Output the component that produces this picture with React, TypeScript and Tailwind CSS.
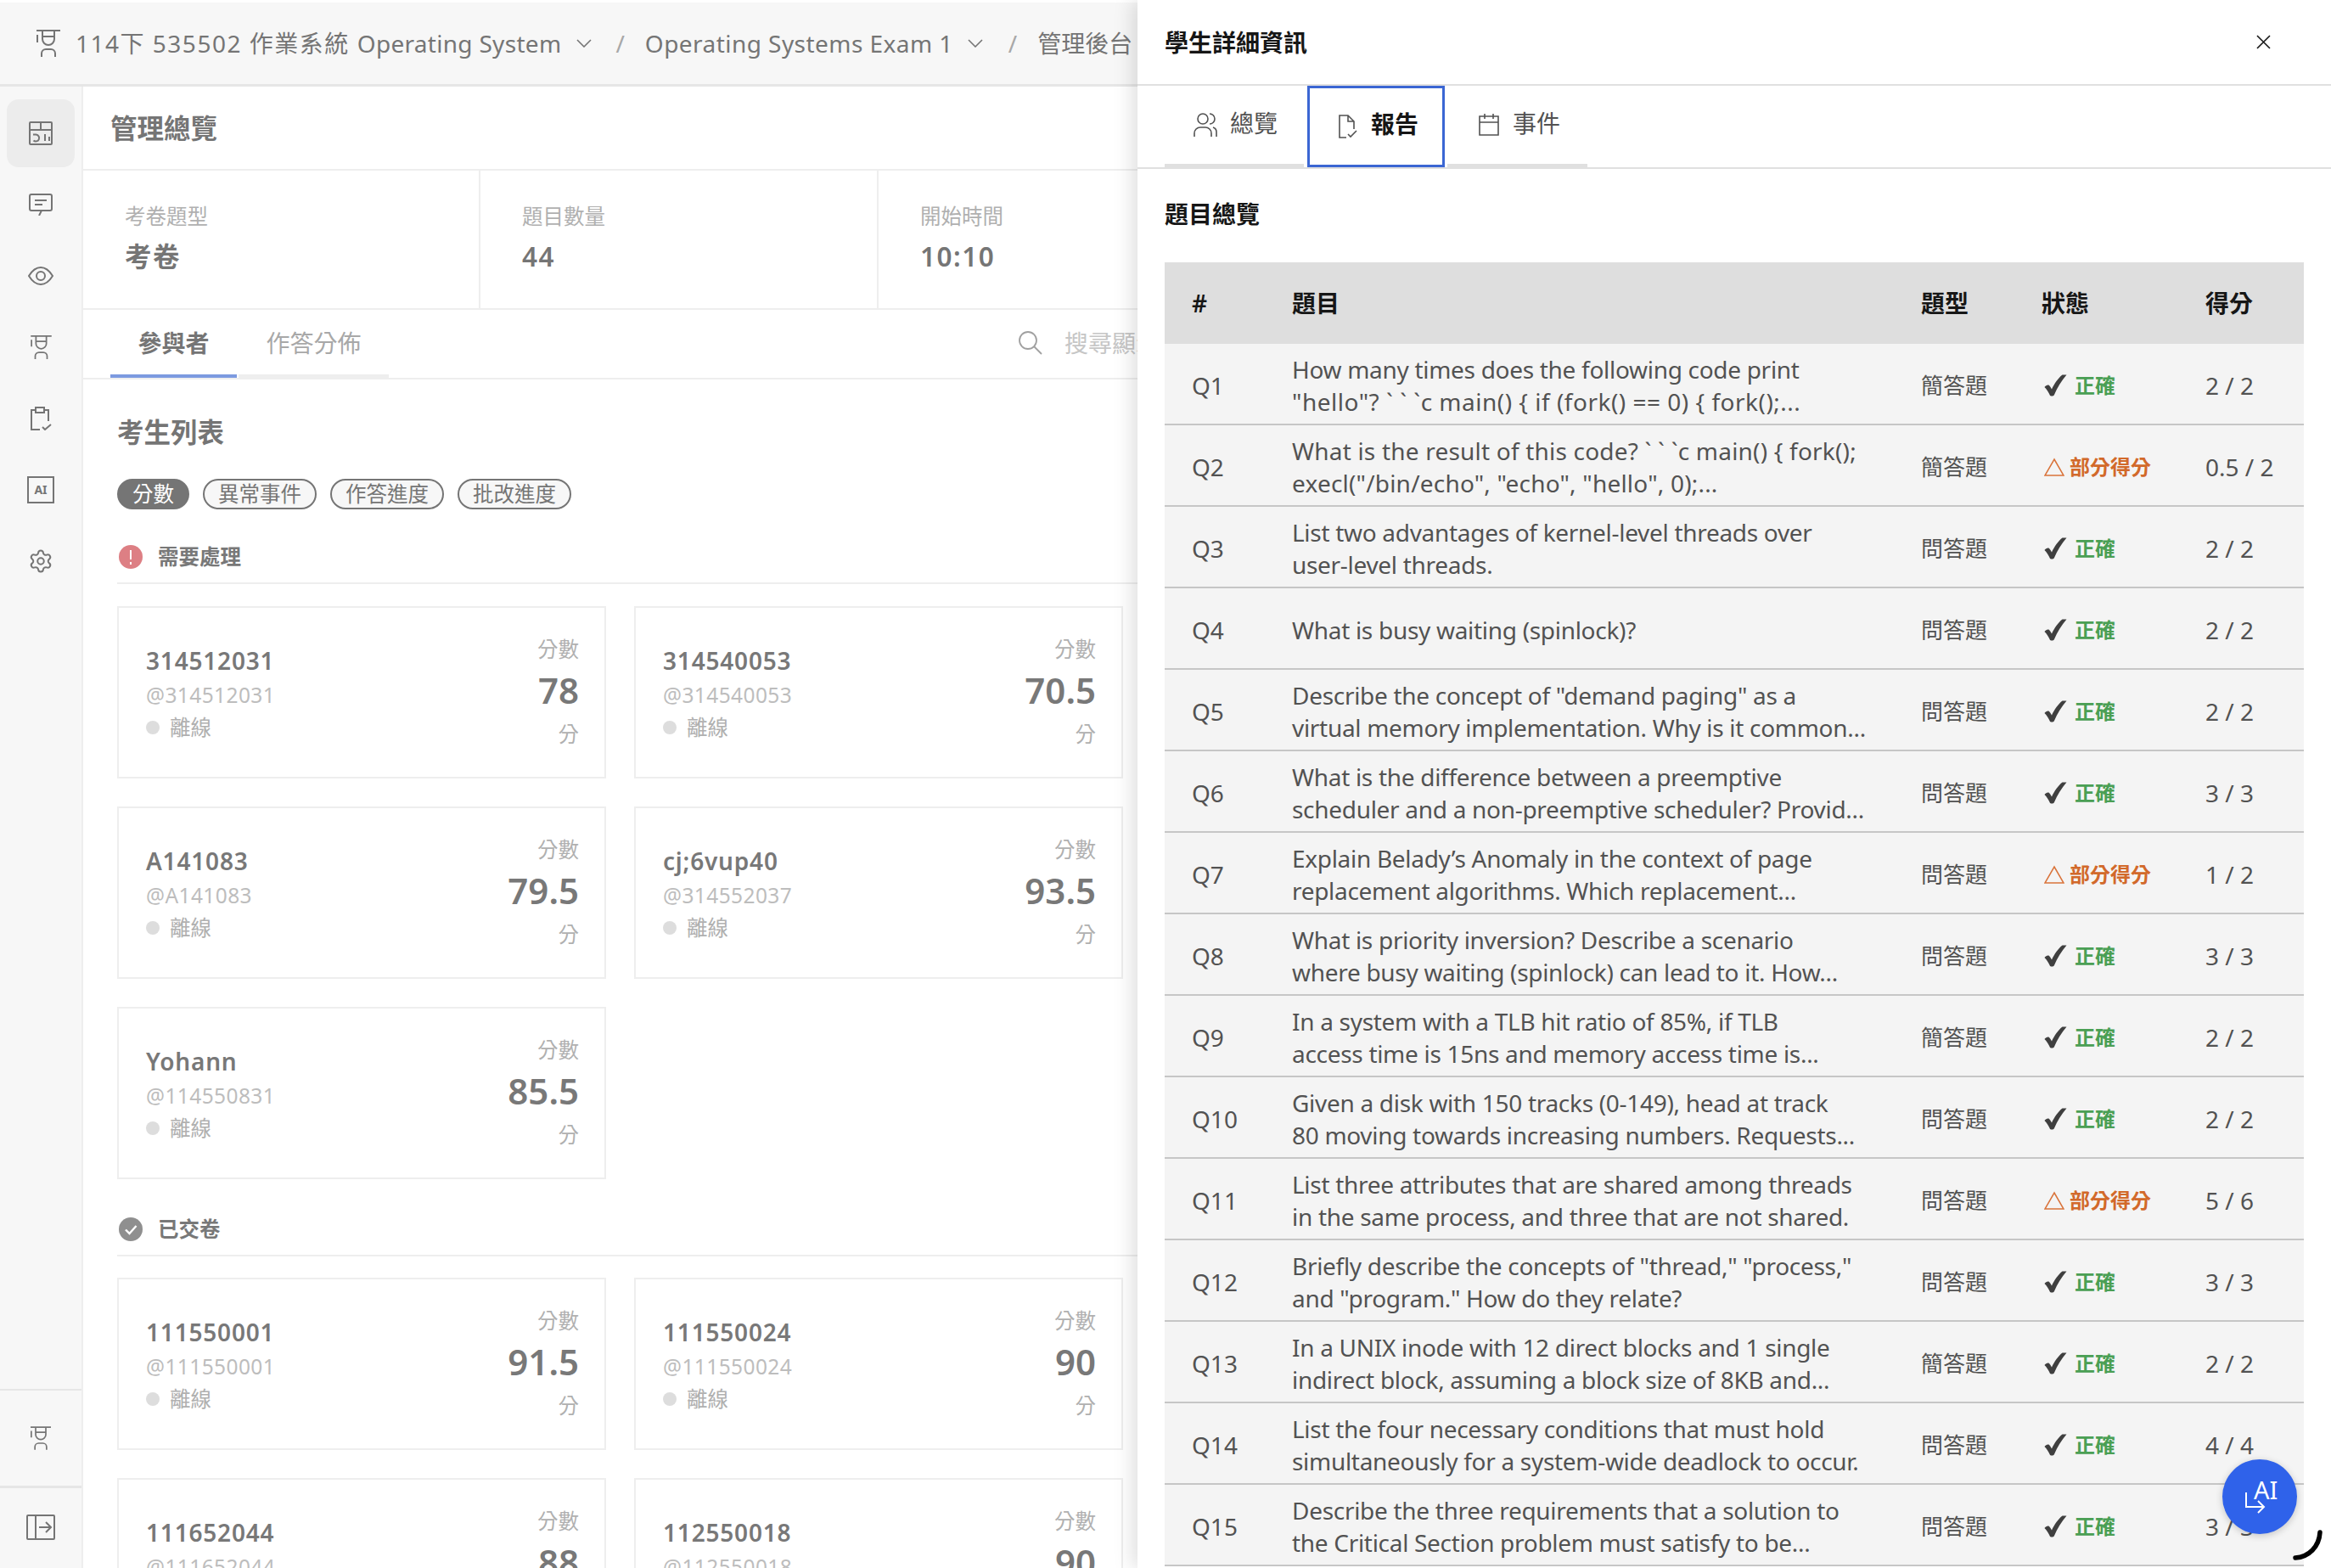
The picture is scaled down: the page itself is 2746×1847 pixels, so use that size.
import React from "react";
import { Settings } from "lucide-react";

type Status = "ok" | "partial";

const rows: { q: string; lines: string[]; type: string; status: Status; score: string }[] = [
  { q: "Q1", lines: ["How many times does the following code print", '"hello"? ` ` `c main() { if (fork() == 0) { fork();...'], type: "簡答題", status: "ok", score: "2 / 2" },
  { q: "Q2", lines: ["What is the result of this code? ` ` `c main() { fork();", 'execl("/bin/echo", "echo", "hello", 0);...'], type: "簡答題", status: "partial", score: "0.5 / 2" },
  { q: "Q3", lines: ["List two advantages of kernel-level threads over", "user-level threads."], type: "問答題", status: "ok", score: "2 / 2" },
  { q: "Q4", lines: ["What is busy waiting (spinlock)?"], type: "問答題", status: "ok", score: "2 / 2" },
  { q: "Q5", lines: ['Describe the concept of "demand paging" as a', "virtual memory implementation. Why is it common..."], type: "問答題", status: "ok", score: "2 / 2" },
  { q: "Q6", lines: ["What is the difference between a preemptive", "scheduler and a non-preemptive scheduler? Provid..."], type: "問答題", status: "ok", score: "3 / 3" },
  { q: "Q7", lines: ["Explain Belady’s Anomaly in the context of page", "replacement algorithms. Which replacement..."], type: "問答題", status: "partial", score: "1 / 2" },
  { q: "Q8", lines: ["What is priority inversion? Describe a scenario", "where busy waiting (spinlock) can lead to it. How..."], type: "問答題", status: "ok", score: "3 / 3" },
  { q: "Q9", lines: ["In a system with a TLB hit ratio of 85%, if TLB", "access time is 15ns and memory access time is..."], type: "簡答題", status: "ok", score: "2 / 2" },
  { q: "Q10", lines: ["Given a disk with 150 tracks (0-149), head at track", "80 moving towards increasing numbers. Requests..."], type: "問答題", status: "ok", score: "2 / 2" },
  { q: "Q11", lines: ["List three attributes that are shared among threads", "in the same process, and three that are not shared."], type: "問答題", status: "partial", score: "5 / 6" },
  { q: "Q12", lines: ['Briefly describe the concepts of "thread," "process,"', 'and "program." How do they relate?'], type: "問答題", status: "ok", score: "3 / 3" },
  { q: "Q13", lines: ["In a UNIX inode with 12 direct blocks and 1 single", "indirect block, assuming a block size of 8KB and..."], type: "簡答題", status: "ok", score: "2 / 2" },
  { q: "Q14", lines: ["List the four necessary conditions that must hold", "simultaneously for a system-wide deadlock to occur."], type: "問答題", status: "ok", score: "4 / 4" },
  { q: "Q15", lines: ["Describe the three requirements that a solution to", "the Critical Section problem must satisfy to be..."], type: "問答題", status: "ok", score: "3 / 3" },
];

const needAction = [
  { name: "314512031", handle: "@314512031", score: "78" },
  { name: "314540053", handle: "@314540053", score: "70.5" },
  { name: "A141083", handle: "@A141083", score: "79.5" },
  { name: "cj;6vup40", handle: "@314552037", score: "93.5" },
  { name: "Yohann", handle: "@114550831", score: "85.5" },
];

const submitted = [
  { name: "111550001", handle: "@111550001", score: "91.5" },
  { name: "111550024", handle: "@111550024", score: "90" },
  { name: "111652044", handle: "@111652044", score: "88" },
  { name: "112550018", handle: "@112550018", score: "90" },
];

function StudentIcon({ className }: { className?: string }) {
  return (
    <svg viewBox="0 0 28 32" fill="none" stroke="currentColor" strokeWidth="2" className={className}>
      <path d="M0 1h28M1 6v9M7 1v10a7 7 0 0 0 14 0V1M7 8h14M6 32v-4a5 5 0 0 1 5-5h6a5 5 0 0 1 5 5v4" />
    </svg>
  );
}

function ChevronDown({ className }: { className?: string }) {
  return (
    <svg viewBox="0 0 18 10" fill="none" stroke="currentColor" strokeWidth="1.6" className={className}>
      <path d="M1 1l8 8 8-8" />
    </svg>
  );
}

function SideIcon({ name }: { name: string }) {
  if (name === "dashboard")
    return (
      <svg viewBox="0 0 28 28" fill="none" stroke="#757575" strokeWidth="2" className="h-[28px] w-[28px]">
        <rect x="1" y="1" width="26" height="26" rx="1" />
        <path d="M1 10h26M14 1v9M5 15.500h3.500a4 4 0 1 1-3 7M19 15v8M24 18v5" />
      </svg>
    );
  if (name === "chat")
    return (
      <svg viewBox="0 0 28 26" fill="none" stroke="#757575" strokeWidth="2" className="h-[26px] w-[28px]">
        <path d="M15 20h10a2 2 0 0 0 2-2V3a2 2 0 0 0-2-2H3a2 2 0 0 0-2 2v15a2 2 0 0 0 2 2h12l-3 6M7 8h14M7 13h9" />
      </svg>
    );
  if (name === "eye")
    return (
      <svg viewBox="0 0 30 22" fill="none" stroke="#757575" strokeWidth="2" className="h-[22px] w-[30px]">
        <path d="M1 11C5 4.500 9.500 1 15 1s10 3.500 14 10c-4 6.500-8.500 10-14 10S5 17.500 1 11z" />
        <circle cx="15" cy="11" r="5" />
      </svg>
    );
  if (name === "student") return <StudentIcon className="h-[28px] w-[25px] text-[#757575]" />;
  if (name === "clipboard")
    return (
      <svg viewBox="0 0 26 28" fill="none" stroke="#757575" strokeWidth="2" className="h-[28px] w-[26px]">
        <path d="M7 4H2v23h10M17 4h5v13M7 1h10v6H7zM15 24l3 3 7-6" />
      </svg>
    );
  if (name === "ai")
    return (
      <div className="flex h-[32px] w-[32px] items-center justify-center border-2 border-[#757575] text-[14px] leading-none font-bold text-[#757575]">
        AI
      </div>
    );
  if (name === "settings") return <Settings size={30} color="#757575" strokeWidth={1.6} />;
  return null;
}

function StudentCard({ name, handle, score }: { name: string; handle: string; score: string }) {
  return (
    <div className="flex h-[203px] items-center justify-between border-2 border-[#eeeeee] bg-white pt-[4px] pr-[30px] pl-[32px]">
      <div className="flex flex-col">
        <span className="text-[28px] leading-[38px] font-semibold tracking-[0.8px] text-[#787878]">{name}</span>
        <span className="mt-[3px] text-[24.5px] leading-[38px] tracking-[0.4px] text-[#bdbdbd]">{handle}</span>
        <div className="flex items-center gap-[12px]">
          <span className="h-[16px] w-[16px] rounded-full bg-[#dddddd]" />
          <span className="text-[24.5px] leading-[38px] text-[#b0b0b0]">離線</span>
        </div>
      </div>
      <div className="flex flex-col items-end">
        <span className="text-[24.5px] leading-[40px] text-[#b0b0b0]">分數</span>
        <span className="mt-[2px] text-[42px] leading-[52px] font-semibold text-[#787878]">{score}</span>
        <span className="text-[24.5px] leading-[52px] text-[#b0b0b0]">分</span>
      </div>
    </div>
  );
}

function SectionHead({ label, kind }: { label: string; kind: "alert" | "done" }) {
  return (
    <div className="flex h-[58px] items-center gap-[18px] border-b-2 border-[#eeeeee] pb-[4px] pl-[2px]">
      {kind === "alert" ? (
        <svg viewBox="0 0 28 28" className="h-[28px] w-[28px]">
          <circle cx="14" cy="14" r="14" fill="#dd7f84" />
          <path d="M14 6v11M14 20v3" stroke="#fff" strokeWidth="2" />
        </svg>
      ) : (
        <svg viewBox="0 0 28 28" className="h-[28px] w-[28px]">
          <circle cx="14" cy="14" r="14" fill="#8f8f8f" />
          <path d="M8 14.500l4.500 4.500 8-9" fill="none" stroke="#fff" strokeWidth="2.400" />
        </svg>
      )}
      <span className="text-[24.5px] font-semibold text-[#787878]">{label}</span>
    </div>
  );
}

function StatusCell({ status }: { status: Status }) {
  if (status === "ok")
    return (
      <div className="flex items-center gap-[9px]">
        <svg viewBox="0 0 27 26" className="h-[26px] w-[27px]" fill="#3f3f3f">
          <path d="M0.500 15C2 13 4.500 12 6 13C7.200 14 8 16 9 17.500C12 11 16.500 4.500 21.500 0.500L26.500 0.500C20.500 7.500 15.500 15.500 12 24C11.200 26 7.300 26 6.800 24.500C5.500 21 3 17.500 0.500 15Z" />
        </svg>
        <span className="text-[24px] font-bold text-[#4a9f54]">正確</span>
      </div>
    );
  return (
    <div className="flex items-center gap-[6px]">
      <svg viewBox="0 0 24 22" className="h-[22px] w-[24px]" fill="none" stroke="#d9733a" strokeWidth="1.500">
        <path d="M12 2L23 21H1z" />
      </svg>
      <span className="text-[24px] font-bold text-[#d2692a]">部分得分</span>
    </div>
  );
}

const tableCols = "grid grid-cols-[118px_741px_142px_193px_148px]";

function lineTracking(line: string) {
  if (line.includes("fork();...")) return "tracking-[0.5px]";
  if (line.includes("`") || line.startsWith("execl")) return "tracking-[0.2px]";
  return "tracking-[-0.3px]";
}

function DetailPanel() {
  return (
    <div className="absolute top-0 right-0 flex h-full w-[1406px] flex-col bg-white shadow-[-6px_0_22px_rgba(0,0,0,0.13)]">
      <div className="flex h-[101px] shrink-0 items-center justify-between border-b-2 border-[#e0e0e0] pr-[71px] pl-[32px]">
        <span className="text-[28px] font-semibold text-[#161616]">學生詳細資訊</span>
        <svg viewBox="0 0 17 17" fill="none" stroke="#161616" strokeWidth="1.600" className="h-[17px] w-[17px]">
          <path d="M1 1l15 15M16 1L1 16" />
        </svg>
      </div>
      <div className="relative flex h-[98px] shrink-0 border-b-2 border-[#e0e0e0] pl-[32px]">
        <div className="flex w-[164px] items-center gap-[15px] border-b-4 border-[#e0e0e0] pl-[34px] text-[#525252]">
          <svg viewBox="0 0 28 28" fill="none" stroke="#525252" strokeWidth="1.600" className="h-[28px] w-[28px]">
            <circle cx="11" cy="7" r="6" />
            <path d="M1 28v-4a7 7 0 0 1 7-7h6a7 7 0 0 1 7 7v4M19 1a6 6 0 0 1 0 12M23 17a6 6 0 0 1 4 6v5" />
          </svg>
          <span className="pb-[4px] text-[28px]">總覽</span>
        </div>
        <div className="ml-[4px] flex w-[162px] items-center gap-[15px] border-[3.5px] border-[#3b66d3] pl-[33px] text-[#161616]">
          <svg viewBox="0 0 24 28" fill="none" stroke="#525252" strokeWidth="1.600" className="h-[28px] w-[24px]">
            <path d="M10 27H2V1h10l7 7v9M12 1v7h7M12 23l3 3 7-7" />
          </svg>
          <span className="pb-[6px] text-[28px] font-semibold">報告</span>
        </div>
        <div className="ml-[3px] flex w-[165px] items-center gap-[16px] border-b-4 border-[#e0e0e0] pl-[37px] text-[#525252]">
          <svg viewBox="0 0 24 26" fill="none" stroke="#525252" strokeWidth="1.600" className="h-[26px] w-[24px]">
            <path d="M1 3h22v22H1zM1 10h22M7 0v6M17 0v6" />
          </svg>
          <span className="pb-[4px] text-[28px]">事件</span>
        </div>
      </div>
      <div className="flex-1 overflow-hidden pr-[32px] pl-[32px]">
        <div className="flex h-[110px] items-start pt-[34px]">
          <span className="text-[28px] leading-[38px] font-semibold text-[#161616]">題目總覽</span>
        </div>
        <div className={`${tableCols} h-[96px] items-center bg-[#dedede] text-[28px] font-semibold text-[#161616]`}>
          <span className="pl-[32px]">#</span>
          <span className="pl-[32px]">題目</span>
          <span className="pl-[32px]">題型</span>
          <span className="pl-[32px]">狀態</span>
          <span className="pl-[32px]">得分</span>
        </div>
        {rows.map((r) => (
          <div key={r.q} className={`${tableCols} h-[96px] items-center border-b-2 border-[#c6c6c6] bg-[#f4f4f4] pt-[4px] text-[#525252]`}>
            <span className="pl-[32px] text-[28px]">{r.q}</span>
            <div className="pl-[32px] text-[28px] leading-[38px] whitespace-nowrap">
              {r.lines.map((l) => (
                <div key={l} className={lineTracking(l)}>
                  {l}
                </div>
              ))}
            </div>
            <span className="pl-[32px] text-[26px]">{r.type}</span>
            <div className="pl-[35px]">
              <StatusCell status={r.status} />
            </div>
            <span className="pl-[32px] text-[28px]">{r.score}</span>
          </div>
        ))}
      </div>
      <div className="absolute top-[1719px] left-[1278px] h-[88px] w-[88px] rounded-full bg-[#2f62ea] text-white shadow-[0_2px_8px_rgba(0,0,0,0.2)]">
        <svg viewBox="0 0 26 28" fill="none" stroke="#fff" strokeWidth="2" className="absolute top-[37px] left-[26px] h-[28px] w-[26px]">
          <path d="M2 2v17h21M16 12l7 7-7 7" />
        </svg>
        <span className="absolute top-[18px] left-[37px] text-[29px] leading-[36px]">AI</span>
      </div>
      <svg viewBox="0 0 40 40" fill="none" stroke="#000" strokeWidth="5.500" strokeLinecap="round" className="absolute top-[1800px] left-[1360px] h-[40px] w-[40px]">
        <path d="M33 5C32 22 20 34 4 35" />
      </svg>
    </div>
  );
}

export default function App() {
  return (
    <div className="relative flex h-[1847px] w-[2746px] flex-col overflow-hidden bg-white font-['Noto_Sans','Noto_Sans_CJK_TC',sans-serif]">
      <div className="mt-[3px] flex h-[99px] shrink-0 items-center border-b-[3px] border-[#e6e6e6] bg-[#f7f7f7] pl-[43px] text-[28px] whitespace-nowrap text-[#757575]">
        <StudentIcon className="h-[32px] w-[28px] text-[#757575]" />
        <span className="ml-[18px] tracking-[1.5px]">114下 535502 作業系統</span>
        <span className="ml-[9px] tracking-[0.3px]">Operating System</span>
        <ChevronDown className="ml-[18px] h-[10px] w-[18px]" />
        <span className="ml-[28px] text-[#a8a8a8]">/</span>
        <span className="ml-[24px] tracking-[0.45px]">Operating Systems Exam 1</span>
        <ChevronDown className="ml-[17px] h-[10px] w-[18px]" />
        <span className="ml-[30px] text-[#a8a8a8]">/</span>
        <span className="ml-[24px]">管理後台</span>
      </div>
      <div className="flex min-h-0 flex-1">
        <div className="flex w-[98px] shrink-0 flex-col border-r-2 border-[#eeeeee] bg-[#f7f7f7]">
          <div className="flex flex-1 flex-col items-center gap-[4px] pt-[15px]">
            {["dashboard", "chat", "eye", "student", "clipboard", "ai", "settings"].map((n, i) => (
              <div key={n} className={`flex h-[80px] w-[80px] items-center justify-center rounded-[14px] ${i === 0 ? "bg-[#ececec]" : ""}`}>
                <SideIcon name={n} />
              </div>
            ))}
          </div>
          <div className="flex h-[114px] items-center justify-center border-t-2 border-[#e6e6e6]">
            <StudentIcon className="h-[28px] w-[24px] text-[#757575]" />
          </div>
          <div className="flex h-[97px] items-center justify-center border-t-[3px] border-[#e6e6e6] pb-[2px]">
            <svg viewBox="0 0 34 30" fill="none" stroke="#757575" strokeWidth="2" className="h-[30px] w-[34px]">
              <rect x="1" y="1" width="32" height="28" rx="1" />
              <path d="M11 1v28M15 15h14M23 9l6 6-6 6" />
            </svg>
          </div>
        </div>
        <div className="min-w-0 flex-1 overflow-hidden bg-white">
          <div className="flex h-[99px] items-center border-b-2 border-[#eeeeee] pl-[32px]">
            <span className="text-[31.500px] font-semibold text-[#757575]">管理總覽</span>
          </div>
          <div className="grid h-[164px] grid-cols-[468px_469px_469px] border-b-2 border-[#eeeeee]">
            {[
              ["考卷題型", "考卷"],
              ["題目數量", "44"],
              ["開始時間", "10:10"],
            ].map(([label, value], i) => (
              <div key={label} className={`flex flex-col pt-[34px] pl-[49px] ${i < 2 ? "border-r-2 border-[#eeeeee]" : ""}`}>
                <span className="text-[24.500px] leading-[40px] text-[#b0b0b0]">{label}</span>
                <span className="mt-[4px] text-[31.500px] leading-[46px] font-semibold tracking-[1.5px] text-[#757575]">{value}</span>
              </div>
            ))}
          </div>
          <div className="flex h-[82px] items-end border-b-2 border-[#eeeeee] pl-[32px]">
            <div className="flex h-full w-[149px] items-center justify-center border-b-4 border-[#7c9ae0] pt-[2px] text-[28px] font-semibold text-[#757575]">參與者</div>
            <div className="ml-[2px] flex h-full w-[177px] items-center justify-center border-b-4 border-[#eeeeee] pt-[2px] text-[28px] text-[#a8a8a8]">作答分佈</div>
            <div className="mb-[20px] ml-[742px] flex items-center gap-[26px] whitespace-nowrap">
              <svg viewBox="0 0 28 28" fill="none" stroke="#a0a0a0" strokeWidth="1.800" className="h-[28px] w-[28px]">
                <circle cx="11" cy="11" r="10" />
                <path d="M18 18l9 9" />
              </svg>
              <span className="text-[28px] text-[#c6c6c6]">搜尋顯示名稱</span>
            </div>
          </div>
          <div className="pt-[40px] pl-[40px]">
            <div className="text-[31.500px] leading-[44px] font-semibold text-[#757575]">考生列表</div>
            <div className="mt-[33px] flex gap-[16px]">
              {["分數", "異常事件", "作答進度", "批改進度"].map((p, i) => (
                <span
                  key={p}
                  className={`flex h-[36px] items-center rounded-full border-2 border-[#757575] px-[16px] text-[24.500px] ${i === 0 ? "bg-[#757575] text-white" : "bg-[#f7f7f7] text-[#757575]"}`}
                >
                  {p}
                </span>
              ))}
            </div>
            <div className="mt-[30px] w-[1228px]">
              <SectionHead label="需要處理" kind="alert" />
              <div className="mt-[26px] grid grid-cols-[576px_576px] gap-[33px]">
                {needAction.map((s) => (
                  <StudentCard key={s.handle} {...s} />
                ))}
              </div>
              <div className="mt-[33px]">
                <SectionHead label="已交卷" kind="done" />
              </div>
              <div className="mt-[25px] grid grid-cols-[576px_576px] gap-[33px]">
                {submitted.map((s) => (
                  <StudentCard key={s.handle} {...s} />
                ))}
              </div>
            </div>
          </div>
        </div>
      </div>
      <DetailPanel />
    </div>
  );
}
